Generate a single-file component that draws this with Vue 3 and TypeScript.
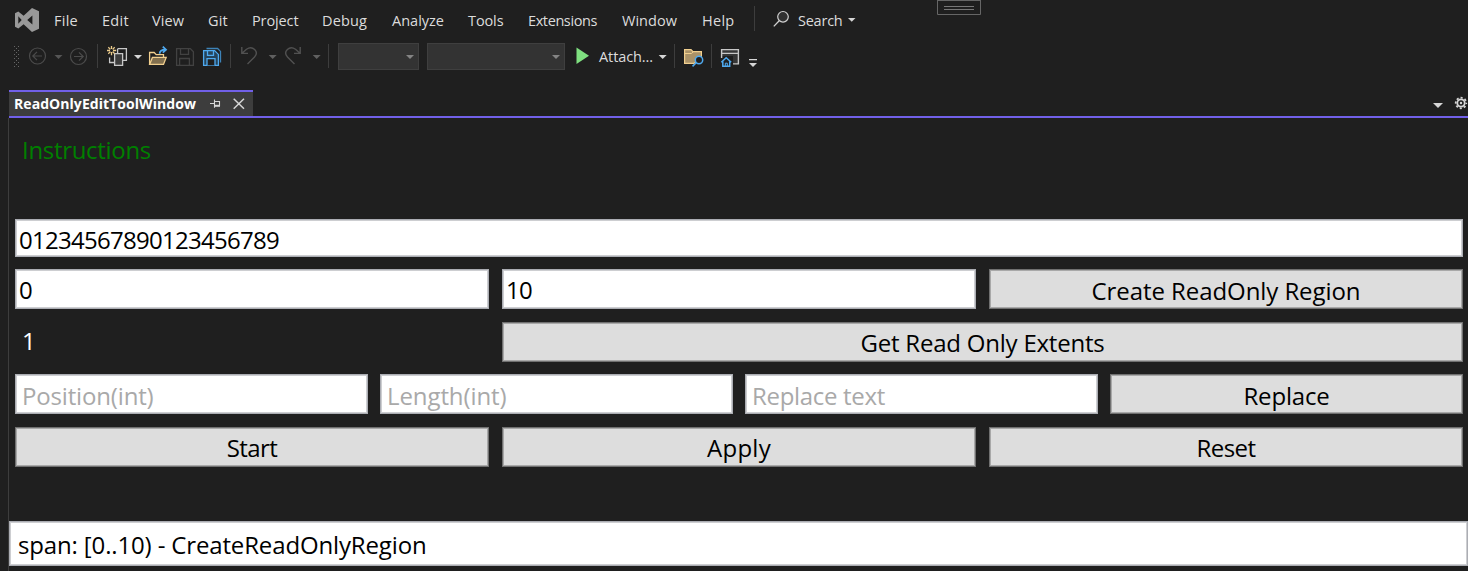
<script setup lang="ts">
import type { Directive } from 'vue'

interface Label { text: string; width: number }

/* Tracks a label so that its advance width equals the given number of pixels. */
const vFit: Directive<HTMLElement, number> = {
  mounted(el, binding) {
    const natural = el.getBoundingClientRect().width
    const count = (el.textContent ?? '').length
    if (count > 1) el.style.letterSpacing = `${(binding.value - natural) / count}px`
  },
}

const menu: Label[] = [
  { text: 'File', width: 24 },
  { text: 'Edit', width: 27 },
  { text: 'View', width: 32 },
  { text: 'Git', width: 20 },
  { text: 'Project', width: 46.5 },
  { text: 'Debug', width: 45 },
  { text: 'Analyze', width: 52 },
  { text: 'Tools', width: 35.5 },
  { text: 'Extensions', width: 69 },
  { text: 'Window', width: 55 },
  { text: 'Help', width: 32.5 },
]

const placeholders: Label[] = [
  { text: 'Position(int)', width: 131.5 },
  { text: 'Length(int)', width: 119.5 },
  { text: 'Replace text', width: 133 },
]

const actions: Label[] = [
  { text: 'Start', width: 50.5 },
  { text: 'Apply', width: 64 },
  { text: 'Reset', width: 59 },
]
</script>

<template>
  <div class="shell">
    <header class="menubar">
      <svg class="logo" width="54" height="40" viewBox="0 0 54 40">
        <path fill="#999" fill-rule="evenodd" d="M32 8 L39 11.3 V28.7 L32 32 L23.6 24.2 L18.3 28.4 L15 26.8 V13.2 L18.3 11.6 L23.6 15.8 Z M18.3 16.2 V23.8 L21.7 20 Z M32.4 15.5 L27.2 20 L32.4 24.5 Z" />
      </svg>
      <nav class="menu">
        <span v-for="m in menu" :key="m.text"><span v-fit="m.width">{{ m.text }}</span></span>
      </nav>
      <svg width="44" height="40" viewBox="754 0 44 40" fill="none">
        <path d="M754.5 6V31" stroke="#3d3d3d" />
        <circle cx="783" cy="16.8" r="5.3" fill="#303030" stroke="#d0d0d0" stroke-width="1.2" />
        <path d="M779.2 20.8L773.8 26.4" stroke="#d0d0d0" stroke-width="1.3" />
      </svg>
      <span class="search"><span v-fit="44.5">Search</span></span>
      <svg width="14" height="40" viewBox="845 0 14 40"><path d="M848 18H855.5L851.75 21.8Z" fill="#d6d6d6" /></svg>
      <svg class="handle" width="44" height="15" viewBox="0 0 44 15">
        <path d="M.5 0V14.5H43.5V0M0 .5H44" fill="none" stroke="#666" />
        <path d="M7 6.5H37M7 9.5H37" stroke="#777" />
      </svg>
    </header>

    <div class="toolbar">
      <svg viewBox="0 42 27 30">
        <defs>
          <pattern id="grip" x="14" y="46" width="4" height="4" patternUnits="userSpaceOnUse">
            <path d="M0 0H1V1H0ZM2 2H3V3H2Z" fill="#666" />
          </pattern>
        </defs>
        <rect x="14" y="46" width="6" height="22" fill="url(#grip)" />
      </svg>
      <svg viewBox="27 42 25 30" fill="none" stroke="#4b4b4b" stroke-width="1.2">
        <circle cx="37.5" cy="56" r="8" />
        <path d="M42 56H33.2M37 51.8L32.8 56L37 60.2" />
      </svg>
      <svg viewBox="52 42 16 30"><path class="dim" d="M54.5 55H62.5L58.5 59Z" /></svg>
      <svg viewBox="68 42 24 30" fill="none" stroke="#4b4b4b" stroke-width="1.2">
        <circle cx="78.5" cy="56.5" r="8" />
        <path d="M74 56.5H82.8M79 52.3L83.2 56.5L79 60.7" />
      </svg>
      <svg viewBox="92 42 12 30"><path class="sep" d="M97.5 44V68" /></svg>
      <svg viewBox="104 42 27 30" fill="none">
        <g stroke="#c8c8c8" stroke-width="1.3">
          <path d="M117.5 48.6H126.4V60.4H122.7" />
          <path d="M114.6 53.6H122.6V65.4H114.6Z" fill="#3c3c3c" />
          <path d="M109.6 57.5V62.5H114.4M117.6 49V53.4" />
        </g>
        <path d="M111.5 46V49M111.5 52V55.2M107 50.5H110M113 50.5H116.2M108.3 47.3L110.4 49.4M112.6 51.6L114.7 53.7M114.7 47.3L112.6 49.4M110.4 51.6L108.3 53.7" stroke="#ebcb8b" stroke-width="1.3" />
      </svg>
      <svg viewBox="131 42 15 30"><path class="bright" d="M134 55H142L138 59Z" /></svg>
      <svg viewBox="146 42 27 30" fill="none">
        <path d="M149.6 64.4V52.5H154.2L156.2 54.6H163.5V57" stroke="#f1cf8e" stroke-width="1.3" />
        <path d="M149.6 64.4L152.4 57.4H166.2L163.5 64.4Z" fill="#82704f" stroke="#f1cf8e" stroke-width="1.3" />
        <path d="M159.6 53.8C159.8 51 161.5 49.7 165.5 49.7M162.8 46.7L166 49.7L162.8 52.7" stroke="#4faaf0" stroke-width="1.8" />
      </svg>
      <svg viewBox="173 42 27 30" fill="none" stroke="#424242" stroke-width="1.3">
        <path d="M176.6 48.6H190.3L193.4 51.7V65.4H176.6ZM180.5 48.6V54.4H188.5V48.6M179.6 65.4V58.5H189.4V65.4" />
      </svg>
      <svg viewBox="200 42 27 30" fill="none" stroke="#4faaf0" stroke-width="1.3">
        <path d="M206.5 48.5H217.6L220.5 51.4V62.5" stroke="#3d83b8" />
        <path d="M203.6 50.6H214.6L218.4 54.4V65.4H203.6Z" fill="#25445c" />
        <path d="M207.5 50.6V55.4H213.5V50.6" />
        <path d="M207 65.4V58.6H215V65.4" fill="#1f1f1f" />
      </svg>
      <svg viewBox="227 42 11 30"><path class="sep" d="M230.5 44V68" /></svg>
      <svg viewBox="238 42 27 30" fill="none" stroke="#515151" stroke-width="1.4">
        <path d="M241.8 47V53.4H248M242 53.2L246.5 49.2C252.5 45 259.5 51.5 254.5 57L247.5 64" />
      </svg>
      <svg viewBox="265 42 17 30"><path class="mid" d="M268.7 55H276.7L272.7 59Z" /></svg>
      <svg viewBox="282 42 26 30" fill="none" stroke="#515151" stroke-width="1.4">
        <path d="M300.2 47V53.4H294M300 53.2L295.5 49.2C289.5 45 282.5 51.5 287.5 57L294.5 64" />
      </svg>
      <svg viewBox="308 42 17 30"><path class="mid" d="M312.7 55H320.7L316.7 59Z" /></svg>
      <svg viewBox="325 42 13 30"><path class="sep" d="M328.5 44V68" /></svg>
      <div class="combo"><svg viewBox="0 0 8 4"><path d="M0 0H8L4 4Z" fill="#848484" /></svg></div>
      <i></i>
      <div class="combo"><svg viewBox="0 0 8 4"><path d="M0 0H8L4 4Z" fill="#848484" /></svg></div>
      <svg viewBox="565 42 34 30"><path d="M576.5 47.5L589 55.7L576.5 64Z" fill="#7fe080" /></svg>
      <span class="attach"><span v-fit="54">Attach...</span></span>
      <svg viewBox="656 42 14 30"><path class="bright" d="M658.7 55H666.7L662.7 59Z" /></svg>
      <svg viewBox="670 42 11 30"><path class="sep" d="M674.5 44V68" /></svg>
      <svg viewBox="681 42 27 30" fill="none">
        <path d="M684.6 63.4V49.6H691L693 51.6H701.4V57L694 63.4Z" fill="#aa9268" stroke="#f1cf8e" stroke-width="1.2" />
        <path d="M684.6 53.5H691.5L693.5 51.6" stroke="#f1cf8e" />
        <circle cx="699" cy="60" r="3.7" fill="#1f1f1f" stroke="#4faaf0" stroke-width="1.5" />
        <path d="M696.2 62.8L692.5 66.4" stroke="#4faaf0" stroke-width="1.6" />
      </svg>
      <svg viewBox="708 42 10 30"><path class="sep" d="M711.5 44V68" /></svg>
      <svg viewBox="718 42 27 30" fill="none">
        <path d="M721.6 57V49.6H738.4V63.9H733V56H721.6" fill="#373737" />
        <path d="M721.6 58V49.6H738.4V63.9H733M721.6 53.4H738.4" stroke="#c8c8c8" stroke-width="1.4" />
        <path d="M721.3 62.2L726.2 57.8L731.2 62.2M722.8 61.4V66.3H729.7V61.4" fill="#1f1f1f" stroke="#4faaf0" stroke-width="1.5" />
        <path d="M725.3 66V63.2H727.3V66" stroke="#4faaf0" />
      </svg>
      <svg viewBox="745 42 20 30"><path class="bright" d="M749 59H757V60.2H749ZM749 63H757L753 67Z" /></svg>
    </div>

    <div class="tabstrip">
      <div class="tab">
        <span class="tabname"><span v-fit="182">ReadOnlyEditToolWindow</span></span>
        <svg width="54" height="24" viewBox="199 92 54 24" fill="none" stroke="#d6d6d6">
          <path d="M210 103.5H214M214.5 99.5V107.8M214.5 101.5H219.5V106" stroke-width="1.1" />
          <path d="M214 105.8H220" stroke-width="2" />
          <path d="M233.7 98.8L244 108.8M244 98.8L233.7 108.8" stroke-width="1.5" />
        </svg>
      </div>
      <svg width="38" height="24" viewBox="1430 92 38 24">
        <path d="M1433 103H1443L1438 108Z" fill="#d6d6d6" />
        <circle cx="1461" cy="103" r="3.7" fill="none" stroke="#d6d6d6" stroke-width="1.8" />
        <circle cx="1461" cy="103" r="5.3" fill="none" stroke="#d6d6d6" stroke-width="1.7" stroke-dasharray="2.1 2.06" stroke-dashoffset="1.05" />
        <circle cx="1461" cy="103" r="1.2" fill="#d6d6d6" />
      </svg>
    </div>

    <main class="pane">
      <div class="form">
        <div class="heading"><span v-fit="129">Instructions</span></div>
        <div class="box sample"><span v-fit="260">01234567890123456789</span></div>
        <div class="row three">
          <div class="box"><span v-fit="13">0</span></div>
          <div class="box"><span v-fit="26">10</span></div>
          <button class="btn"><span v-fit="269">Create ReadOnly Region</span></button>
        </div>
        <div class="row three extents">
          <div class="count">1</div>
          <button class="btn wide"><span v-fit="244">Get Read Only Extents</span></button>
        </div>
        <div class="row four">
          <div v-for="p in placeholders" :key="p.text" class="box hint"><span v-fit="p.width">{{ p.text }}</span></div>
          <button class="btn"><span v-fit="86">Replace</span></button>
        </div>
        <div class="row three last">
          <button v-for="a in actions" :key="a.text" class="btn"><span v-fit="a.width">{{ a.text }}</span></button>
        </div>
      </div>
      <div class="box log"><span v-fit="408.5">span: [0..10) - CreateReadOnlyRegion</span></div>
    </main>
  </div>
</template>

<style>
body { margin: 0; background: #1f1f1f; overflow: hidden; }
</style>

<style scoped>
.shell {
  box-sizing: border-box;
  width: 1468px;
  height: 571px;
  background: #1f1f1f;
  color: #dcdcdc;
  font-family: "Open Sans", "Noto Sans", sans-serif;
  font-size: 14.5px;
  overflow: hidden;
  white-space: nowrap;
}
.shell svg { display: block; }
.menubar { position: relative; display: flex; height: 42px; line-height: 42px; }
.menu { display: grid; grid-template-columns: 48px 50px 56px 44px 70px 70px 76px 60px 94px 80px 52px; }
.search { width: 47px; }
.handle { position: absolute; left: 937px; top: 0; }

.toolbar {
  display: grid;
  height: 30px;
  grid-template-columns: 27px 25px 16px 24px 12px 27px 15px 27px 27px 27px 11px 27px 17px 26px 17px 13px 81px 8px 138px 34px 57px 14px 11px 27px 10px 27px 20px;
}
.toolbar > svg { width: 100%; height: 30px; }
.dim { fill: #555; }
.mid { fill: #606060; }
.bright { fill: #d6d6d6; }
.sep { stroke: #3d3d3d; }
.combo {
  box-sizing: border-box;
  display: flex;
  align-items: center;
  justify-content: flex-end;
  height: 27px;
  margin-top: 1px;
  padding-right: 4px;
  border: 1px solid #3f3f3f;
  background: #333;
}
.combo svg { width: 8px; height: 4px; }
.attach { line-height: 29px; }

.tabstrip {
  display: flex;
  justify-content: space-between;
  align-items: flex-end;
  height: 26px;
  margin: 18px 0 0 9px;
  border-bottom: 2px solid #7160e8;
}
.tab { display: flex; box-sizing: border-box; width: 244px; height: 26px; border-top: 2px solid #7160e8; background: #3d3d3d; }
.tabname { width: 185px; padding-left: 5px; color: #fff; font-size: 14px; font-weight: 700; line-height: 23px; }

.pane { box-sizing: border-box; height: 453px; margin-left: 8px; border-left: 1px solid #3d3d3d; font-size: 24px; line-height: 36px; }
.form { box-sizing: border-box; height: 403px; padding: 14px 5px 0 6px; }
.heading { height: 87px; padding-left: 7px; color: #008000; }
.row { display: grid; height: 40px; margin-top: 12px; }
.three { grid-template-columns: repeat(3, 474px); column-gap: 13px; }
.four { grid-template-columns: repeat(4, 353px); column-gap: 12px; }
.extents, .last { margin-top: 13px; }
.wide { grid-column: span 2; }
.count { padding: 1px 0 0 7px; color: #fff; }
.box {
  box-sizing: border-box;
  padding: 2px 0 0 3px;
  border: 1px solid #abadb3;
  box-shadow: inset 0 0 0 1px #cdced1;
  background: #fff;
  color: #000;
  line-height: 35px;
}
.sample { height: 38px; }
.hint { padding: 3px 0 0 6px; color: #a9a9a9; }
.btn {
  box-sizing: border-box;
  margin: 0;
  padding: 3px 0 0;
  border: 1px solid #707070;
  border-radius: 0;
  box-shadow: inset 0 0 0 1px #a8a8a8;
  background: #ddd;
  color: #000;
  font: inherit;
  line-height: 34px;
  text-align: center;
}
.extents .btn, .last .btn { padding: 1px 0 0; }
.log { height: 45px; padding: 4px 0 0 8px; line-height: 37px; }
</style>
